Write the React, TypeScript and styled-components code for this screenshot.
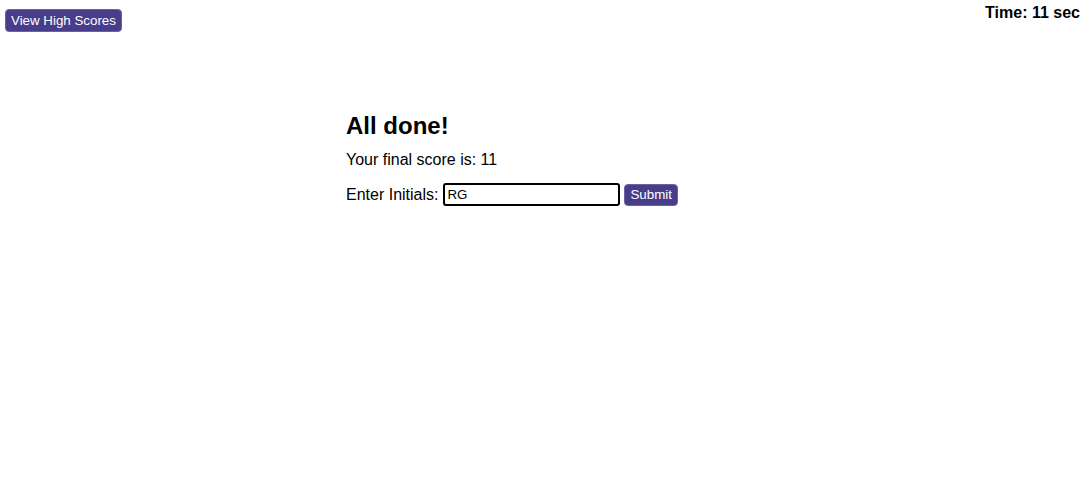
import React, { useState } from 'react';
import styled, { createGlobalStyle } from 'styled-components';

const GlobalStyle = createGlobalStyle`
  html, body {
    margin: 0;
    padding: 0;
    background: #ffffff;
    font-family: 'Liberation Sans', Arial, sans-serif;
    color: #000000;
  }
`;

const TopBar = styled.header`
  display: flex;
  justify-content: space-between;
  align-items: flex-start;
  padding: 9px 4px 0 5px;
`;

const PurpleButton = styled.button<{ $height?: number }>`
  background: #483d8b;
  color: #ffffff;
  border: 1px solid #6a62a4;
  border-radius: 4px;
  font-family: 'Liberation Sans', Arial, sans-serif;
  font-size: 13.33px;
  padding: 0 5px;
  height: ${(p) => p.$height ?? 23}px;
  line-height: 17px;
  cursor: pointer;
`;

const Timer = styled.div`
  font-size: 16px;
  font-weight: bold;
  margin-top: -5px;
`;

const Main = styled.main`
  width: 392px;
  margin: 80px auto 0;
`;

const Heading = styled.h2`
  font-size: 24px;
  font-weight: bold;
  margin: 0 0 10px;
  line-height: 28px;
`;

const Score = styled.p`
  font-size: 16px;
  margin: 0 0 13px;
  line-height: 20px;
`;

const Form = styled.form`
  display: flex;
  align-items: center;
  gap: 4px;
  font-size: 16px;
`;

const Label = styled.label`
  margin-right: 1px;
`;

const InitialsInput = styled.input`
  width: 177px;
  height: 23px;
  box-sizing: border-box;
  border: 2px solid #000000;
  border-radius: 3px;
  padding: 0 2px;
  font-family: 'Liberation Sans', Arial, sans-serif;
  font-size: 13.33px;
  outline: none;
`;

const App: React.FC = () => {
  const [initials, setInitials] = useState('RG');

  return (
    <>
      <GlobalStyle />
      <TopBar>
        <PurpleButton type="button">View High Scores</PurpleButton>
        <Timer>Time: 11 sec</Timer>
      </TopBar>
      <Main>
        <Heading>All done!</Heading>
        <Score>Your final score is: 11</Score>
        <Form onSubmit={(e) => e.preventDefault()}>
          <Label htmlFor="initials">Enter Initials:</Label>
          <InitialsInput
            id="initials"
            value={initials}
            onChange={(e) => setInitials(e.target.value)}
          />
          <PurpleButton type="submit" $height={22}>Submit</PurpleButton>
        </Form>
      </Main>
    </>
  );
};

export default App;
